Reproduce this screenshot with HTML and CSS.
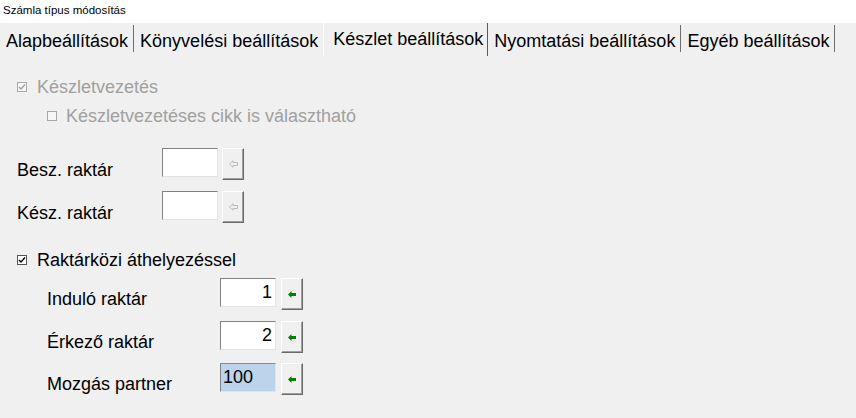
FILE: index.html
```html
<!DOCTYPE html>
<html lang="hu">
<head>
  <meta charset="UTF-8" />
  <title>Számla típus módosítás</title>
  <link rel="stylesheet" href="styles.css">
</head>
<body>
  <div class="titlebar">Számla típus módosítás</div>

  <div class="tabs">
    <div class="tab">Alapbeállítások</div>
    <div class="tab">Könyvelési beállítások</div>
    <div class="tab active">Készlet beállítások</div>
    <div class="tab">Nyomtatási beállítások</div>
    <div class="tab">Egyéb beállítások</div>
  </div>

  <div class="panel">
    <label class="check disabled">
      <span class="box"><svg viewBox="0 0 8 8"><path d="M1 4 L3 6 L7 1.5" /></svg></span>
      Készletvezetés
    </label>
    <label class="check sub disabled">
      <span class="box"></span>
      Készletvezetéses cikk is választható
    </label>

    <div class="field first">
      <span class="lbl">Besz. raktár</span>
      <span class="input"></span>
      <span class="btn off"><svg viewBox="0 0 9 8"><path d="M0.5 4 L4 0.8 V2.5 H8.5 V5.5 H4 V7.2 Z" /></svg></span>
    </div>
    <div class="field">
      <span class="lbl">Kész. raktár</span>
      <span class="input"></span>
      <span class="btn off"><svg viewBox="0 0 9 8"><path d="M0.5 4 L4 0.8 V2.5 H8.5 V5.5 H4 V7.2 Z" /></svg></span>
    </div>

    <label class="check transfer">
      <span class="box"><svg viewBox="0 0 8 8"><path d="M1 4 L3 6 L7 1.5" /></svg></span>
      Raktárközi áthelyezéssel
    </label>

    <div class="field inner">
      <span class="lbl">Induló raktár</span>
      <span class="input num">1</span>
      <span class="btn"><svg viewBox="0 0 8 7"><path d="M0 3.5 L3.5 0 V2 H8 V5 H3.5 V7 Z" /></svg></span>
    </div>
    <div class="field inner">
      <span class="lbl">Érkező raktár</span>
      <span class="input num">2</span>
      <span class="btn"><svg viewBox="0 0 8 7"><path d="M0 3.5 L3.5 0 V2 H8 V5 H3.5 V7 Z" /></svg></span>
    </div>
    <div class="field inner">
      <span class="lbl">Mozgás partner</span>
      <span class="input selected">100</span>
      <span class="btn"><svg viewBox="0 0 8 7"><path d="M0 3.5 L3.5 0 V2 H8 V5 H3.5 V7 Z" /></svg></span>
    </div>
  </div>
</body>
</html>
```

FILE: styles.css
```css
body {
  margin: 0;
  padding: 0;
  font-family: 'Liberation Sans', Arial, sans-serif;
  background-color: #f0f0f0;
  color: #000;
  width: 856px;
  height: 418px;
  overflow: hidden;
}

.titlebar {
  background-color: #fff;
  height: 20px;
  padding: 3px 0 0 3px;
  font-size: 11.5px;
  line-height: 14px;
}

.tabs {
  display: flex;
  align-items: flex-start;
  height: 31px;
  padding-top: 2px;
  font-size: 18px;
}

.tab {
  line-height: 20px;
  height: 27px;
  box-sizing: border-box;
  padding: 6px 5px 1px 6px;
  border-right: 1px solid #6d6d6d;
  white-space: nowrap;
}

.tab:nth-child(2) {
  border-right: none;
  padding-right: 5px;
}

.tab.active {
  margin-top: -2px;
  height: 33px;
  padding: 6px 4px 0 9px;
  border-left: 1px solid #fff;
  border-right: 1px solid #5a5a5a;
}

.panel {
  padding: 21px 0 0 17px;
  font-size: 18px;
}

.check {
  display: flex;
  align-items: center;
  gap: 10px;
  height: 20px;
  line-height: 20px;
  margin-bottom: 9px;
}

.check.sub {
  margin-left: 30px;
  gap: 9px;
}

.check.disabled {
  color: #a0a0a0;
}

.box {
  width: 10px;
  height: 10px;
  box-sizing: border-box;
  border: 1px solid #555;
  background-color: #fff;
  display: flex;
}

.box svg {
  width: 8px;
  height: 8px;
  fill: none;
  stroke: #000;
  stroke-width: 1.4;
}

.check.disabled .box {
  border-color: #a8a8a8;
  background-color: #f6f6f6;
}

.check.disabled .box svg {
  stroke: #a0a0a0;
}

.field {
  display: flex;
  align-items: flex-start;
  height: 43px;
}

.field.first {
  margin-top: 22px;
}

.field .lbl {
  width: 145px;
  padding-top: 12px;
  line-height: 20px;
}

.input {
  width: 56px;
  height: 29px;
  box-sizing: border-box;
  background-color: #fff;
  border-top: 1px solid #828282;
  border-left: 1px solid #828282;
  border-right: 1px solid #e3e3e3;
  border-bottom: 1px solid #e3e3e3;
  line-height: 26px;
  padding: 0 2px;
}

.input.num {
  text-align: right;
  padding-right: 3px;
}

.input.selected {
  background-color: #bcd3ec;
  border-top-color: #8c8c8c;
}

.btn {
  width: 22px;
  height: 32px;
  box-sizing: border-box;
  margin-left: 4px;
  background-color: #f0f0f0;
  border-top: 1px solid #fff;
  border-left: 1px solid #fff;
  border-right: 1px solid #696969;
  border-bottom: 1px solid #696969;
  box-shadow: inset -1px -1px 0 #a0a0a0;
  display: flex;
  justify-content: center;
  align-items: center;
}

.btn svg {
  width: 8px;
  height: 7px;
  fill: #008000;
}

.btn.off svg {
  width: 9px;
  height: 8px;
  fill: none;
  stroke: #b4b4b4;
  stroke-width: 0.9;
}

.check.transfer {
  margin-top: 16px;
  margin-bottom: 8px;
}

.field.inner {
  padding-left: 30px;
}

.field.inner .lbl {
  width: 173px;
  padding-top: 11px;
}

.field.inner .btn {
  margin-left: 5px;
}

.field.inner:nth-last-child(2) {
  height: 42px;
}
```
